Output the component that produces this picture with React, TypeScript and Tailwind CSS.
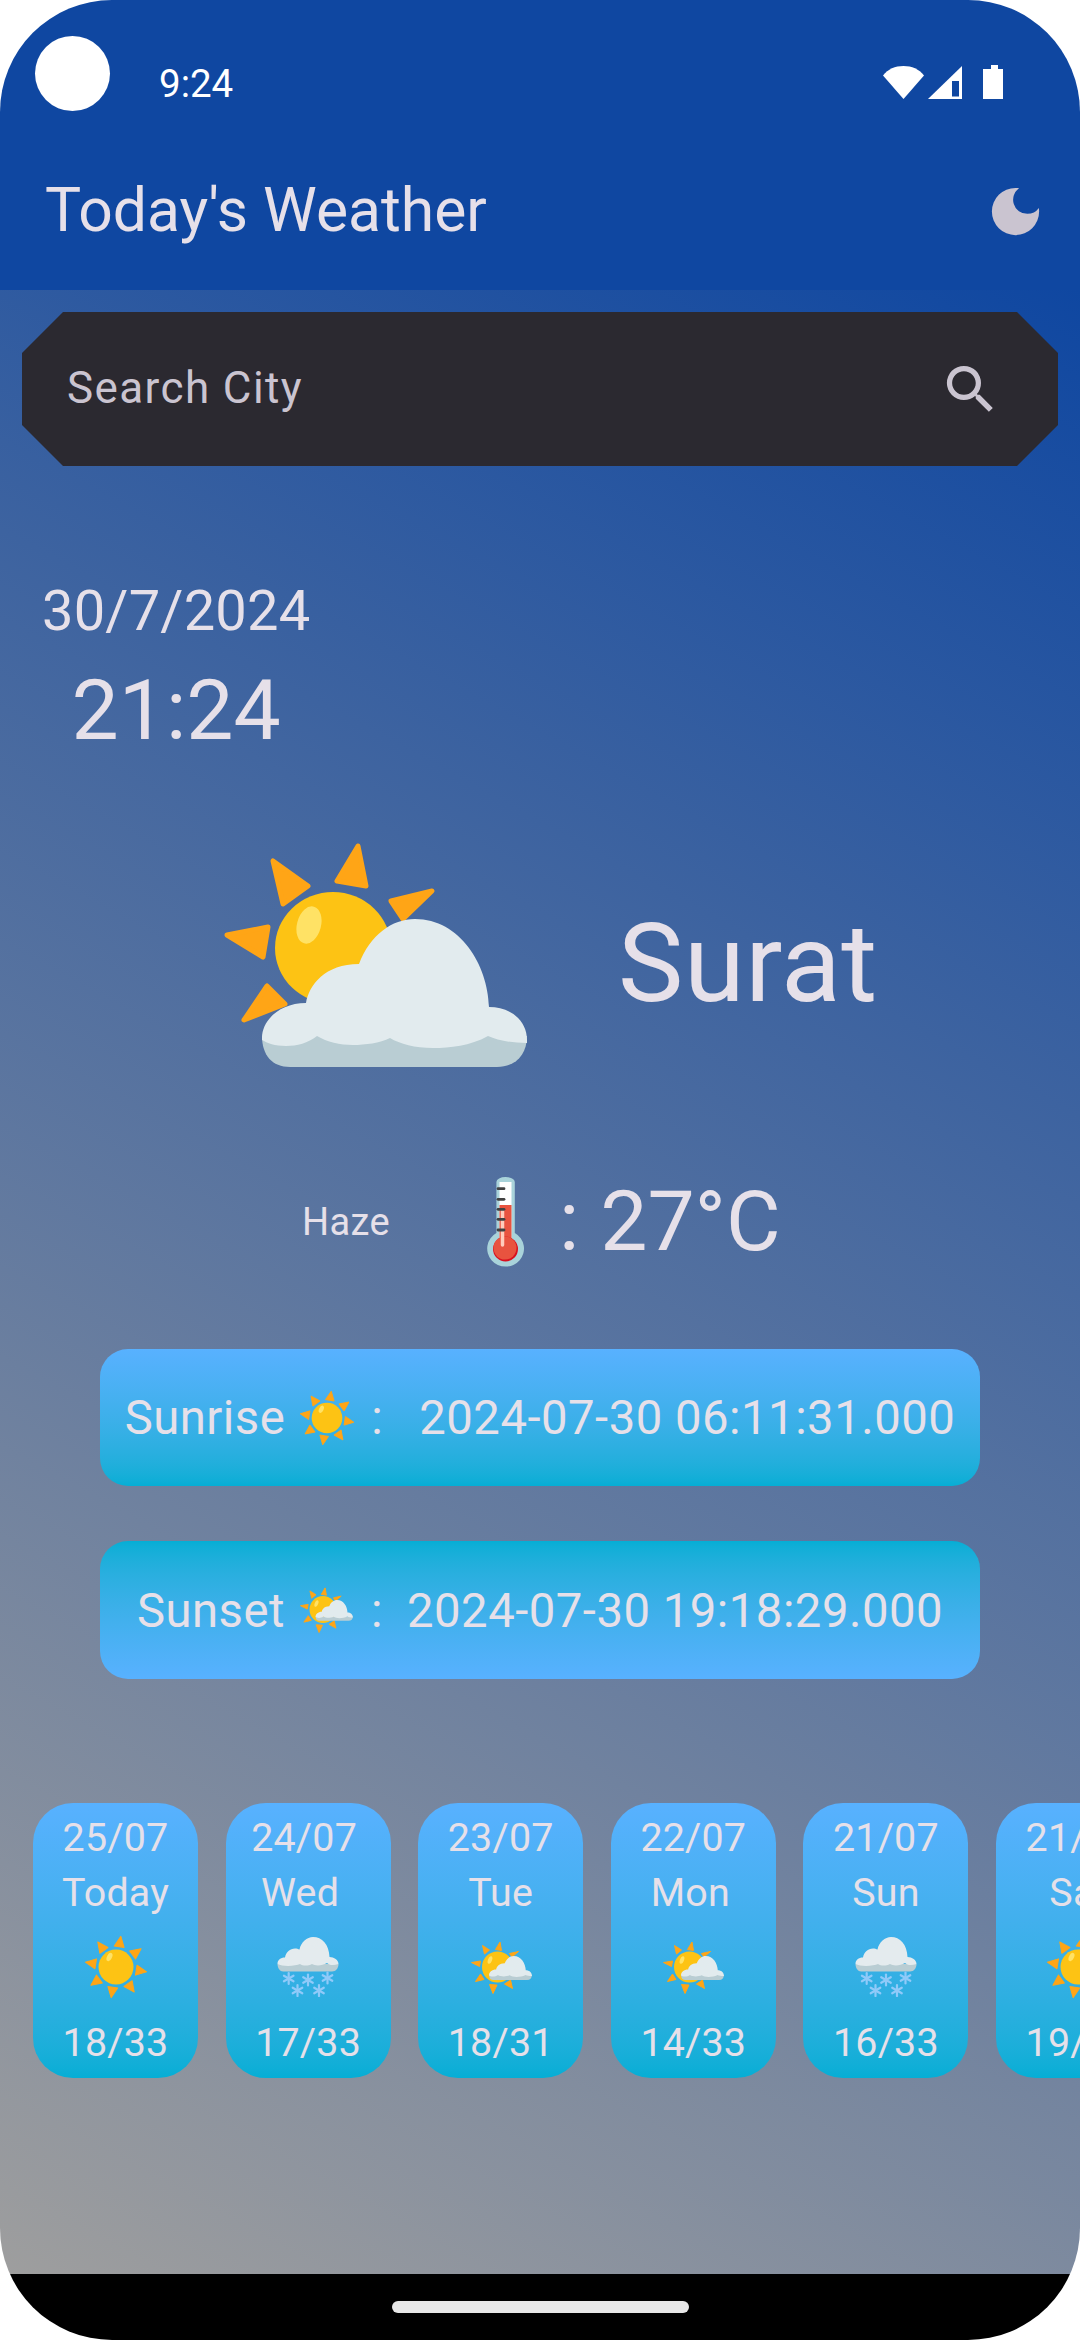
import { MdDarkMode, MdSearch } from "react-icons/md"

function CloudShape() {
	return (
		<>
			<path
				d="M262 1036 C527 1036 527 1036 527 1036 C527 1055 515 1067 497 1067 L290 1067 C272 1067 262 1055 262 1036Z"
				fill="#b9cdd3"
			/>
			<path
				d="M262 1038 C262 1020 280 1003 306 1003 C309 985 325 964 359 964 C370 935 392 919 415 919 C460 919 488 965 489 1007 C510 1007 527 1020 527 1040 L527 1043 C510 1043 497 1040 488 1036 C470 1046 450 1048 433 1048 C415 1048 400 1044 390 1038 C380 1043 365 1045 353 1045 C340 1045 327 1042 317 1036 C308 1043 297 1046 286 1046 C275 1046 267 1043 262 1040Z"
				fill="#e2ebee"
			/>
		</>
	)
}

function SunCloud({ className }: { className: string }) {
	return (
		<svg viewBox="215 835 320 240" className={className}>
			<g fill="#ffa516" stroke="#ffa516" strokeWidth="5" strokeLinejoin="round">
				<path d="M358 846 337 881 366 886Z" />
				<path d="M273 861 283 904 308 886Z" />
				<path d="M432 891 391 901 403 919Z" />
				<path d="M227 935 263 957 268 927Z" />
				<path d="M267 986 244 1020 285 1004Z" />
			</g>
			<ellipse cx="333" cy="948" rx="58" ry="56" fill="#fdc314" />
			<ellipse cx="309" cy="925" rx="12" ry="19" fill="#ffe265" transform="rotate(15 309 925)" />
			<CloudShape />
		</svg>
	)
}

// sun with a small cloud in front, used in the cards and the sunset row
function SunSmallCloud({ className }: { className: string }) {
	return (
		<svg viewBox="0 0 62 53" className={className}>
			<g fill="#ffa516" stroke="#ffa516" strokeLinejoin="round">
				<path d="M30 1 25.500 8.500 31.500 9.500Z" />
				<path d="M12.500 4.500 14.500 13 19.500 9Z" />
				<path d="M48.500 10.500 39.500 12.500 42 16Z" />
				<path d="M1.500 21.500 9.500 25.500 10.500 20Z" />
				<path d="M5.500 40.500 14 38.500 10.500 33Z" />
				<path d="M23 52.500 27 44 19.500 43.500Z" />
				<path d="M42.500 47.500 40.500 39 34.500 43Z" />
			</g>
			<circle cx="27.500" cy="26" r="15.500" fill="#fdc314" />
			<ellipse cx="20" cy="19" rx="2" ry="4" fill="#ffe265" transform="rotate(20 20 19)" />
			<g transform="translate(19 15) scale(0.162) translate(-262 -919)">
				<CloudShape />
			</g>
		</svg>
	)
}

function Sun({ className }: { className: string }) {
	const rays = [9, 54, 99, 144, 189, 234, 279, 324]
	return (
		<svg viewBox="0 0 64 64" className={className}>
			{rays.map((r) => (
				<path key={r} d="M27 11.500 37 11.500 32 1Z" fill="#ffa516" stroke="#ffa516" strokeLinejoin="round" transform={`rotate(${r} 32 32)`} />
			))}
			<circle cx="32" cy="32" r="17.500" fill="#fdc314" />
			<ellipse cx="25.500" cy="22" rx="2.500" ry="4.500" fill="#ffe265" transform="rotate(25 25.500 22)" />
		</svg>
	)
}

function Flake({ x, y }: { x: number; y: number }) {
	return (
		<g stroke="#90caf9" strokeWidth="2.200" strokeLinecap="round" transform={`translate(${x} ${y})`}>
			<path d="M0 -5.500V5.500" />
			<path d="M-4.800 -2.800 4.800 2.800" />
			<path d="M-4.800 2.800 4.800 -2.800" />
		</g>
	)
}

function Snow({ className }: { className: string }) {
	return (
		<svg viewBox="0 0 62 60" className={className}>
			<path d="M0.500 27H61.500C61.500 31 59 34.500 55 34.500H6C3 34.500 0.500 31 0.500 27Z" fill="#b9cdd3" />
			<path
				d="M0.500 27C0.500 23 3.500 20.500 8 20.500C9 15 13 11.500 18 11.500C20 11.500 21 12 22.500 12.500C24 5 30 0 36 0C45 0 52 7 52.500 20C57 20 61.500 23 61.500 27C56 29 52 28 50 26C45 29 38 29 35 27C31 29 26 29 23 27C19 29 6 30 0.500 27Z"
				fill="#e4ebee"
			/>
			<Flake x={11.700} y={41.500} />
			<Flake x={31} y={43} />
			<Flake x={50.500} y={41} />
			<Flake x={20.500} y={53.500} />
			<Flake x={42} y={53.500} />
		</svg>
	)
}

function Thermometer() {
	return (
		<svg viewBox="0 0 37 90" className="w-[37px] h-[90px] shrink-0">
			<path d="M9.400 5a9.200 5 0 0 1 18.400 0V56a18.400 18 0 1 1-18.400 0Z" fill="#a9d3da" />
			<rect x="12.500" y="5" width="12" height="62" fill="#ffffff" />
			<rect x="12.500" y="28" width="12" height="40" fill="#e8533f" />
			<circle cx="18.500" cy="72" r="12.500" fill="#d9101f" />
			<circle cx="18" cy="71" r="11.500" fill="#e8533f" />
			<path d="M15.500 33V68" stroke="#ffccbc" strokeWidth="3.500" strokeLinecap="round" />
			<g stroke="#424242" strokeWidth="2.800" strokeLinecap="round">
				<path d="M11 11.700H17" />
				<path d="M11 22.300H17" />
				<path d="M11 32.300H17" />
				<path d="M11 42.300H17" />
				<path d="M11 53H17" />
			</g>
		</svg>
	)
}

const days = [
	{ date: "25/07", day: "Today", temp: "18/33", icon: "sun", dateShift: "", dayShift: "" },
	{ date: "24/07", day: "Wed", temp: "17/33", icon: "snow", dateShift: "pr-[8px]", dayShift: "pr-[16px]" },
	{ date: "23/07", day: "Tue", temp: "18/31", icon: "cloud", dateShift: "", dayShift: "" },
	{ date: "22/07", day: "Mon", temp: "14/33", icon: "cloud", dateShift: "", dayShift: "pr-[6px]" },
	{ date: "21/07", day: "Sun", temp: "16/33", icon: "snow", dateShift: "", dayShift: "" },
	{ date: "21/07", day: "Sat", temp: "19/33", icon: "sun", dateShift: "", dayShift: "" },
]

function DayCard({ item }: { item: (typeof days)[number] }) {
	return (
		<div className="w-[165px] h-[275px] shrink-0 rounded-[40px] bg-gradient-to-b from-[#58b1ff] to-[#05aed5] flex flex-col items-center pt-[9px] text-[39.400px] leading-[52px] tracking-[0.2px] text-[#e6e0e9]">
			<p className={item.dateShift}>{item.date}</p>
			<p className={`mt-[3px] ${item.dayShift}`}>{item.day}</p>
			<div className="mt-[16px] h-[64px] flex items-center justify-center">
				{item.icon === "sun" && <Sun className="w-[64px] h-[64px]" />}
				{item.icon === "snow" && <Snow className="w-[62px] h-[60px]" />}
				{item.icon === "cloud" && <SunSmallCloud className="w-[62px] h-[53px]" />}
			</div>
			<p className="mt-[18px]">{item.temp}</p>
		</div>
	)
}

export default function App() {
	return (
		<div className="w-[1080px] h-[2340px] bg-white">
			<div className="relative w-full h-full rounded-[112px] overflow-hidden flex flex-col font-['Roboto',sans-serif] text-[#e6e0e9]">
				<div className="absolute left-[35px] top-[36px] w-[75px] h-[75px] rounded-full bg-white"></div>

				<header className="h-[290px] shrink-0 bg-[#0f47a1] flex flex-col">
					<div className="h-[176px] pl-[159px] pr-[77px] flex items-start justify-between">
						<span className="mt-[62px] text-[38.500px] leading-[44px] text-white">9:24</span>
						<div className="mt-[65px] flex items-start">
							<svg viewBox="0 0 120 34" className="w-[120px] h-[34px] fill-white">
								<path d="M0 10.500C5 4 12 1 20.500 1S36 4 41 10.500L20.500 34Z" />
								<path d="M45 34 79 1V34Z" />
								<path d="M69 16H76V31.500H69Z" fill="#0f47a1" />
								<path d="M105 4H108V0H115V4H120V34H100V4Z" />
							</svg>
						</div>
					</div>
					<div className="pl-[45px] pr-[33px] flex items-center justify-between">
						<h1 className="text-[60.600px] leading-[70px] font-normal">Today's Weather</h1>
						<MdDarkMode className="w-[63px] h-[63px] text-[#cac4d0]" />
					</div>
				</header>

				<main className="flex-1 min-h-0 bg-[linear-gradient(208.6deg,#0f47a1,#9e9e9e)] flex flex-col">
					<div className="mx-[22px] mt-[22px] h-[154px] shrink-0 bg-[#2b2930] pl-[45px] pr-[56px] flex items-center justify-between text-[#cac4d0] [clip-path:polygon(41px_0,calc(100%-41px)_0,100%_41px,100%_calc(100%-41px),calc(100%-41px)_100%,41px_100%,0_calc(100%-41px),0_41px)]">
						<span className="text-[44px] tracking-[1.400px] -mt-[3px]">Search City</span>
						<MdSearch className="w-[63px] h-[63px]" />
					</div>

					<div className="ml-[42px] mt-[112px] w-fit flex flex-col items-center">
						<p className="text-[56px] leading-[66px] tracking-[0.2px]">30/7/2024</p>
						<p className="mt-[18px] text-[84px] leading-[98px]">21:24</p>
					</div>

					<div className="mt-[75px] pl-[215px] h-[240px] shrink-0 flex items-start">
						<SunCloud className="w-[320px] h-[240px] shrink-0" />
						<span className="ml-[83px] mt-[64px] text-[110px] leading-[130px] tracking-[0.6px]">Surat</span>
					</div>

					<div className="mt-[102px] pl-[302px] h-[90px] shrink-0 flex items-center">
						<span className="w-[185px] shrink-0 text-[38px] tracking-[0.4px]">Haze</span>
						<Thermometer />
						<span className="ml-[35px] text-[84px] leading-[98px]">: 27°C</span>
					</div>

					<div className="mt-[82px] mx-[100px] h-[137px] shrink-0 rounded-[28px] bg-gradient-to-b from-[#58b1ff] to-[#05aed5] flex items-center justify-center text-[47.250px] tracking-[0.5px]">
						<span className="mt-[2px]">Sunrise</span>
						<Sun className="ml-[14px] w-[56px] h-[56px]" />
						<span className="ml-[16px] mt-[2px]">:</span>
						<span className="ml-[36px] mt-[2px]">2024-07-30 06:11:31.000</span>
					</div>
					<div className="mt-[55px] mx-[100px] h-[138px] shrink-0 rounded-[28px] bg-gradient-to-b from-[#05aed5] to-[#58b1ff] flex items-center justify-center text-[47.250px] tracking-[0.5px]">
						<span className="mt-[2px]">Sunset</span>
						<SunSmallCloud className="ml-[14px] w-[54px] h-[46px]" />
						<span className="ml-[18px] mt-[2px]">:</span>
						<span className="ml-[24px] mt-[2px]">2024-07-30 19:18:29.000</span>
					</div>

					<div className="mt-[124px] pl-[33px] flex gap-[27.600px] overflow-hidden">
						{days.map((item, i) => (
							<DayCard key={i} item={item} />
						))}
					</div>
				</main>

				<footer className="h-[66px] shrink-0 bg-black flex justify-center pt-[27px]">
					<div className="w-[297px] h-[12px] rounded-full bg-[#e8e8e8]"></div>
				</footer>
			</div>
		</div>
	)
}
